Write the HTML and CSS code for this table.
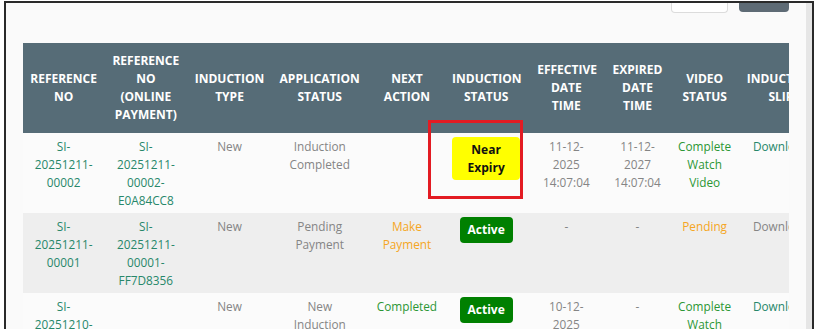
FILE: index.html
```html
<!DOCTYPE html>
<html>
<head>
<meta charset="utf-8">
<link rel="stylesheet" href="styles.css">
</head>
<body>
<div class="frame">
  <div class="main">
    <div class="toolbar">
      <span class="btn btn-light"></span>
      <span class="btn btn-dark"></span>
    </div>
    <div class="table-wrap">
      <table class="grid">
        <colgroup>
          <col class="w81"><col class="w83"><col class="w84"><col class="w96"><col class="w78"><col class="w80"><col class="w80"><col class="w62"><col class="w72"><col class="w80">
        </colgroup>
        <thead>
          <tr>
            <th>REFERENCE NO</th>
            <th>REFERENCE NO (ONLINE PAYMENT)</th>
            <th>INDUCTION TYPE</th>
            <th>APPLICATION STATUS</th>
            <th>NEXT ACTION</th>
            <th>INDUCTION STATUS</th>
            <th class="wide">EFFECTIVE DATE TIME</th>
            <th>EXPIRED DATE TIME</th>
            <th>VIDEO STATUS</th>
            <th>INDUCTION SLIP</th>
          </tr>
        </thead>
        <tbody>
          <tr>
            <td class="teal">SI-20251211-00002</td>
            <td class="teal">SI-20251211-00002-E0A84CC8</td>
            <td class="muted">New</td>
            <td class="muted">Induction Completed</td>
            <td></td>
            <td class="badge-cell"><span class="badge badge-warn">Near Expiry</span></td>
            <td class="muted wide">11-12-2025 14:07:04</td>
            <td class="muted narrow">11-12-2027 14:07:04</td>
            <td class="green">Complete Watch Video</td>
            <td class="teal">Download</td>
          </tr>
          <tr class="striped">
            <td class="teal">SI-20251211-00001</td>
            <td class="teal">SI-20251211-00001-FF7D8356</td>
            <td class="muted">New</td>
            <td class="muted">Pending Payment</td>
            <td class="orange">Make Payment</td>
            <td class="badge-cell"><span class="badge badge-ok">Active</span></td>
            <td class="muted wide">-</td>
            <td class="muted narrow">-</td>
            <td class="orange">Pending</td>
            <td class="muted">Download</td>
          </tr>
          <tr>
            <td class="teal">SI-20251210-00001</td>
            <td class="teal"></td>
            <td class="muted">New</td>
            <td class="muted">New<br>Induction</td>
            <td class="green">Completed</td>
            <td class="badge-cell"><span class="badge badge-ok">Active</span></td>
            <td class="muted wide">10-12-2025 09:12:40</td>
            <td class="muted narrow">-</td>
            <td class="green">Complete Watch Video</td>
            <td class="teal">Download</td>
          </tr>
        </tbody>
      </table>
    </div>
  </div>
  <div class="scrollbar"></div>
</div>
<div class="highlight"></div>
</body>
</html>
```
FILE: styles.css
```css
html, body {
  margin: 0;
  padding: 0;
  background: #ffffff;
  overflow: hidden;
  height: 329px;
}
body {
  position: relative;
  font-family: "Open Sans", "Liberation Sans", sans-serif;
}
.frame {
  margin: 1px 0 0 4px;
  width: 806px;
  height: 400px;
  border-top: 2px solid #2a2a2a;
  border-left: 2px solid #2a2a2a;
  border-right: 2px solid #2a2a2a;
  background: #fafafa;
  display: flex;
}
.main {
  width: 800px;
  padding: 0 17px;
  box-sizing: border-box;
}
.scrollbar {
  width: 6px;
  background: #e6e6e6;
}
.toolbar {
  display: flex;
  justify-content: flex-end;
  align-items: flex-start;
  gap: 11px;
  height: 10px;
}
.btn {
  display: block;
  border-radius: 0 0 4px 4px;
  box-sizing: border-box;
}
.btn-light {
  width: 57px;
  height: 10px;
  background: #ffffff;
  border: 1px solid #dcdcdc;
  border-top: none;
}
.btn-dark {
  width: 50px;
  height: 9px;
  background: #5e6b75;
}
.table-wrap {
  margin-top: 30px;
  width: 766px;
  overflow: hidden;
}
.grid {
  border-collapse: collapse;
  table-layout: fixed;
  width: 798px;
  font-size: 11.8px;
  line-height: 18px;
}
.w81 { width: 81px; }
.w83 { width: 83px; }
.w84 { width: 84px; }
.w96 { width: 96px; }
.w78 { width: 78px; }
.w80 { width: 80px; }
.w62 { width: 62px; }
.w72 { width: 72px; }
.grid th {
  background: #566c77;
  color: #ffffff;
  font-weight: 700;
  font-size: 12px;
  height: 90px;
  padding: 0 6px;
  text-align: center;
  vertical-align: middle;
  box-sizing: border-box;
}
.grid td {
  padding: 4px 8px 4px;
  height: 80px;
  box-sizing: border-box;
  text-align: center;
  vertical-align: top;
  background: #fbfbfb;
}
.grid tr.striped td {
  background: #eeeeee;
}
.grid th.wide,
.grid td.wide {
  padding-left: 11px;
  padding-right: 11px;
}
.grid td.badge-cell,
.grid td.narrow {
  padding-left: 6px;
  padding-right: 6px;
}
.teal { color: #27876a; }
.muted { color: #858585; }
.green { color: #2c9735; }
.orange { color: #f5a623; }
.badge {
  display: inline-block;
  font-weight: 700;
  font-size: 12px;
  border-radius: 4px;
}
.badge-warn {
  background: #ffff00;
  color: #111111;
  padding: 4px 6px;
  line-height: 17.5px;
}
.badge-ok {
  background: #008000;
  color: #ffffff;
  padding: 4px 8px;
  line-height: 18px;
}
.highlight {
  position: absolute;
  left: 428px;
  top: 120px;
  width: 95px;
  height: 79px;
  border: 3px solid #e31b23;
  box-sizing: border-box;
}
```
